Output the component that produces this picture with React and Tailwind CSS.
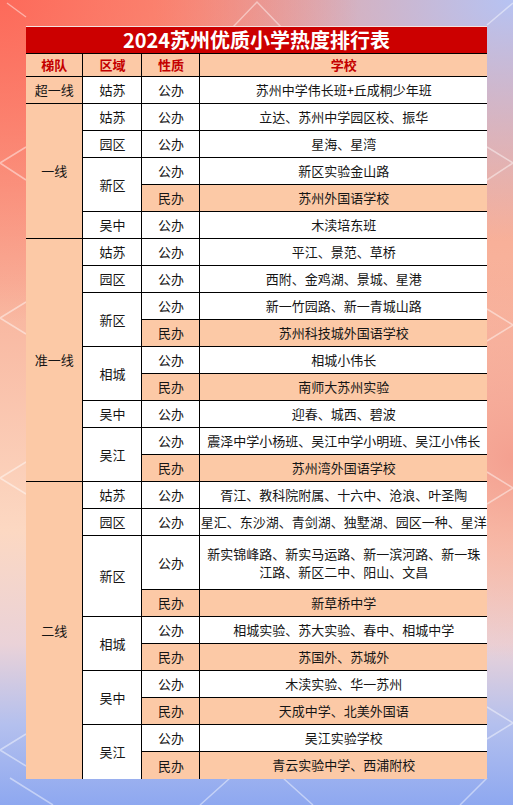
import React from 'react';

const groups = [
  {
    tier: '超一线',
    regions: [{ name: '姑苏', rows: [['公办', '苏州中学伟长班+丘成桐少年班']] }],
  },
  {
    tier: '一线',
    regions: [
      { name: '姑苏', rows: [['公办', '立达、苏州中学园区校、振华']] },
      { name: '园区', rows: [['公办', '星海、星湾']] },
      { name: '新区', rows: [['公办', '新区实验金山路'], ['民办', '苏州外国语学校']] },
      { name: '吴中', rows: [['公办', '木渎培东班']] },
    ],
  },
  {
    tier: '准一线',
    regions: [
      { name: '姑苏', rows: [['公办', '平江、景范、草桥']] },
      { name: '园区', rows: [['公办', '西附、金鸡湖、景城、星港']] },
      { name: '新区', rows: [['公办', '新一竹园路、新一青城山路'], ['民办', '苏州科技城外国语学校']] },
      { name: '相城', rows: [['公办', '相城小伟长'], ['民办', '南师大苏州实验']] },
      { name: '吴中', rows: [['公办', '迎春、城西、碧波']] },
      { name: '吴江', rows: [['公办', '震泽中学小杨班、吴江中学小明班、吴江小伟长'], ['民办', '苏州湾外国语学校']] },
    ],
  },
  {
    tier: '二线',
    regions: [
      { name: '姑苏', rows: [['公办', '胥江、教科院附属、十六中、沧浪、叶圣陶']] },
      { name: '园区', rows: [['公办', '星汇、东沙湖、青剑湖、独墅湖、园区一种、星洋']] },
      {
        name: '新区',
        rows: [
          ['公办', ['新实锦峰路、新实马运路、新一滨河路、新一珠', '江路、新区二中、阳山、文昌']],
          ['民办', '新草桥中学'],
        ],
      },
      { name: '相城', rows: [['公办', '相城实验、苏大实验、春中、相城中学'], ['民办', '苏国外、苏城外']] },
      { name: '吴中', rows: [['公办', '木渎实验、华一苏州'], ['民办', '天成中学、北美外国语']] },
      { name: '吴江', rows: [['公办', '吴江实验学校'], ['民办', '青云实验中学、西浦附校']] },
    ],
  },
];

// faint diamond lines of the backdrop
const lines = [
  'M0 163 L26 147 M0 163 L26 180',
  'M0 318 L26 302 M0 318 L26 334',
  'M0 478 L26 462 M0 478 L26 494',
  'M0 750 L26 734 M0 750 L26 766',
  'M513 163 L487 147 M513 163 L487 180',
  'M513 325 L487 309 M513 325 L487 341',
  'M513 488 L487 472 M513 488 L487 504',
  'M513 723 L487 707 M513 723 L487 739',
  'M7 3 L26 17 M487 25 L513 3 M233 27 L257 2 L281 27',
  'M10 778 L53 805 M200 805 L230 778 M283 778 L313 805 M460 805 L487 778',
];

function School({ text }) {
  if (Array.isArray(text)) {
    return (
      <>
        {text[0]}
        <br />
        {text[1]}
      </>
    );
  }
  return text;
}

export default function App() {
  const body = [];
  groups.forEach((g, gi) => {
    const lastGroup = gi === groups.length - 1;
    const tierSpan = g.regions.reduce((n, r) => n + r.rows.length, 0);
    g.regions.forEach((r, ri) => {
      const lastRegion = lastGroup && ri === g.regions.length - 1;
      r.rows.forEach((row, i) => {
        const lastRow = lastRegion && i === r.rows.length - 1;
        const peach = row[0] === '民办';
        const tall = Array.isArray(row[1]);
        body.push(
          <tr key={`${gi}-${ri}-${i}`} className={tall ? 'h-[54px]' : 'h-[27px]'}>
            {ri === 0 && i === 0 && (
              <td
                rowSpan={tierSpan}
                className={`border border-l-0 border-black bg-[#fcc9a6] ${lastGroup ? 'border-b-0' : ''}`}
              >
                {g.tier}
              </td>
            )}
            {i === 0 && (
              <td
                rowSpan={r.rows.length}
                className={`border border-black bg-white ${lastRegion ? 'border-b-0' : ''}`}
              >
                {r.name}
              </td>
            )}
            <td className={`border border-black ${peach ? 'bg-[#fcc9a6]' : 'bg-white'} ${lastRow ? 'border-b-0' : ''}`}>
              {row[0]}
            </td>
            <td
              className={`border border-r-0 border-black whitespace-nowrap leading-[18px] ${peach ? 'bg-[#fcc9a6]' : 'bg-white'} ${lastRow ? 'border-b-0' : ''}`}
            >
              <School text={row[1]} />
            </td>
          </tr>
        );
      });
    });
  });

  return (
    <div className="relative h-[805px] w-full overflow-hidden bg-[radial-gradient(ellipse_70%_40%_at_0%_0%,#fd6a5a_0%,transparent_100%),radial-gradient(ellipse_70%_30%_at_100%_0%,#b6c3f3_0%,transparent_100%),radial-gradient(ellipse_40%_25%_at_100%_57%,#f4a090_0%,transparent_100%),linear-gradient(to_bottom,#f89d86_0%,#f8b39c_35%,#fcd8c2_66%,#ead2d8_80%,#b4c0ee_90%,#8ea8f0_100%)] font-['Noto_Sans_CJK_SC',sans-serif]">
      <svg className="absolute inset-0" width="513" height="805" viewBox="0 0 513 805">
        <path d={lines.join(' ')} stroke="#ffffff" strokeOpacity="0.45" strokeWidth="1.5" fill="none" />
      </svg>

      <div className="relative flex justify-center pt-[26px]">
        <table className="w-[461px] table-fixed border-collapse border-t border-t-[#f3e2df] text-center text-[13px] text-[#151515]">
          <colgroup>
            <col className="w-[57px]" />
            <col className="w-[59px]" />
            <col className="w-[58px]" />
            <col className="w-[287px]" />
          </colgroup>
          <thead>
            <tr className="h-[27px]">
              <th colSpan={4} className="border-b border-black bg-[#cc0000] text-[20px] font-bold leading-none text-white">
                2024苏州优质小学热度排行表
              </th>
            </tr>
            <tr className="h-[23px] text-[13px] font-bold text-[#c40000]">
              <th className="border border-l-0 border-black bg-[#fcc9a6]">梯队</th>
              <th className="border border-black bg-[#fcc9a6]">区域</th>
              <th className="border border-black bg-[#fcc9a6]">性质</th>
              <th className="border border-r-0 border-black bg-[#fcc9a6]">学校</th>
            </tr>
          </thead>
          <tbody>{body}</tbody>
        </table>
      </div>
    </div>
  );
}
